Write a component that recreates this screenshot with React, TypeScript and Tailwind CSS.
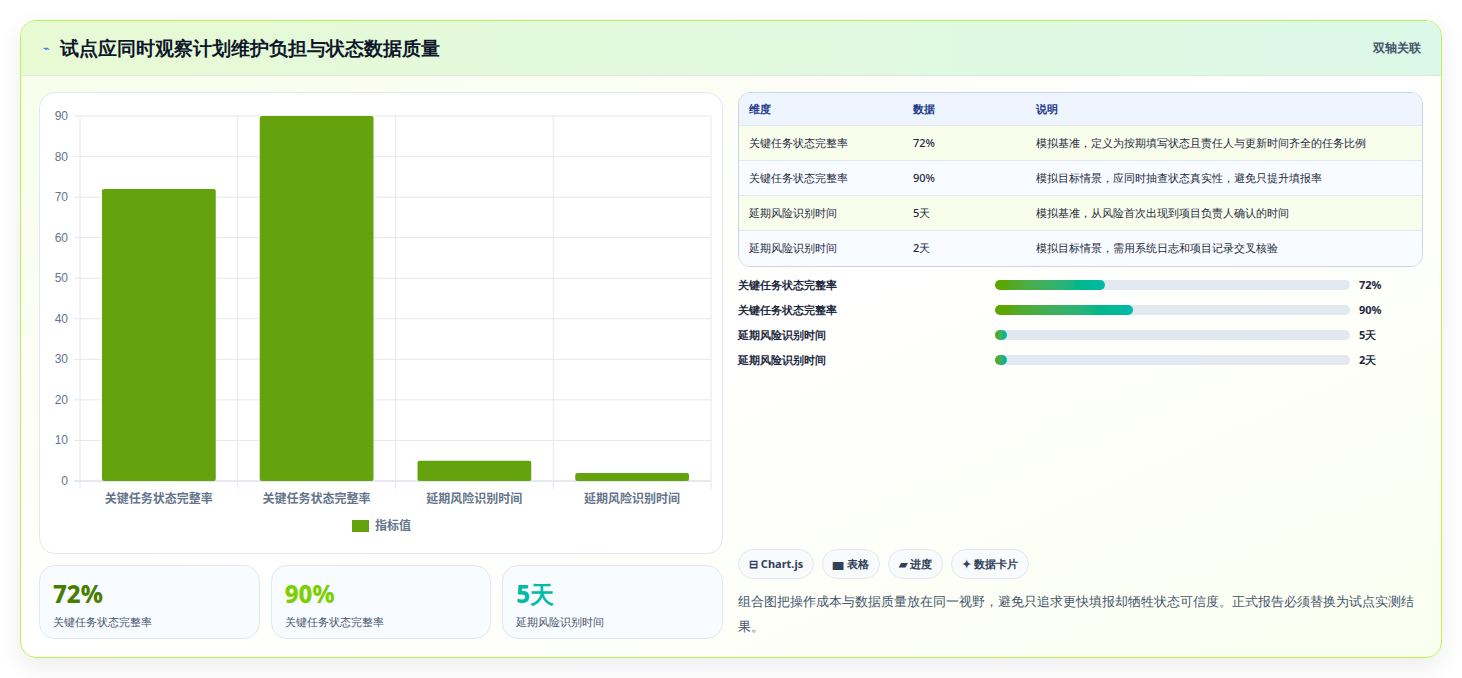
import React from "react";

const rows = [
  { name: "关键任务状态完整率", val: "72%", note: "模拟基准，定义为按期填写状态且责任人与更新时间齐全的任务比例", w: "31%" },
  { name: "关键任务状态完整率", val: "90%", note: "模拟目标情景，应同时抽查状态真实性，避免只提升填报率", w: "39%" },
  { name: "延期风险识别时间", val: "5天", note: "模拟基准，从风险首次出现到项目负责人确认的时间", w: "12px" },
  { name: "延期风险识别时间", val: "2天", note: "模拟目标情景，需用系统日志和项目记录交叉核验", w: "12px" },
];

const vals = [72, 90, 5, 2];

function Chart() {
  const L = 40, R = 671, T = 23, B = 388;
  const cw = (R - L) / 4;
  const y = (v: number) => B - ((B - T) * v) / 90;
  return (
    <svg width="683" height="460" className="block" style={{ fontFamily: "'Liberation Sans','Noto Sans CJK SC',sans-serif" }}>
      {[0, 10, 20, 30, 40, 50, 60, 70, 80, 90].map((t) => (
        <g key={t}>
          <line x1={L - 6} x2={R} y1={y(t)} y2={y(t)} stroke={t === 0 ? "#cbd5e1" : "#e5e7eb"} />
          <text x={L - 12} y={y(t) + 4} textAnchor="end" fontSize="12" fill="#64748b">{t}</text>
        </g>
      ))}
      {[0, 1, 2, 3, 4].map((i) => (
        <line key={i} x1={L + cw * i} x2={L + cw * i} y1={T} y2={B + 8} stroke="#e5e7eb" />
      ))}
      {vals.map((v, i) => (
        <g key={i}>
          <rect x={L + cw * i + 22} y={y(v)} width={cw - 44} height={B - y(v)} rx="2" fill="#64a30d" />
          <text x={L + cw * i + cw / 2} y={410} textAnchor="middle" fontSize="12" fill="#64748b" fontWeight="600">
            {i < 2 ? "关键任务状态完整率" : "延期风险识别时间"}
          </text>
        </g>
      ))}
      <rect x="312" y="427" width="17" height="12" fill="#64a30d" />
      <text x="335" y="437" fontSize="12" fill="#64748b" fontWeight="600">指标值</text>
    </svg>
  );
}

export default function App() {
  return (
    <div className="min-h-[678px] bg-white p-5 font-['Liberation_Sans','Noto_Sans_CJK_SC',sans-serif]">
      <div className="overflow-hidden rounded-2xl border border-lime-300 bg-gradient-to-br from-[#f8fde9] via-white to-[#fbfff0] shadow-[0_8px_24px_rgba(0,0,0,0.08)]">
        <div className="flex h-[55px] items-center justify-between border-b border-[#dfe8d8] bg-gradient-to-r from-[#e7fad4] to-[#dcf8e8] pl-[22px] pr-5">
          <div className="flex items-center gap-[10px]">
            <span className="text-[11px] text-blue-600">⌁</span>
            <h1 className="text-[19px] font-bold text-slate-900">试点应同时观察计划维护负担与状态数据质量</h1>
          </div>
          <span className="text-xs font-semibold text-slate-600">双轴关联</span>
        </div>
        <div className="flex gap-[15px] p-[18px] pt-4">
          <div className="flex w-[684px] flex-col gap-[11px]">
            <div className="h-[462px] rounded-2xl border border-slate-200 bg-white"><Chart /></div>
            <div className="grid grid-cols-3 gap-[11px]">
              {[
                ["72%", "text-lime-700"],
                ["90%", "text-lime-500"],
                ["5天", "text-teal-500"],
              ].map(([v, c], i) => (
                <div key={i} className="h-[74px] rounded-2xl border border-slate-200 bg-[#f8fbff] px-[13px] pt-3">
                  <div className={`text-2xl font-extrabold ${c}`}>{v}</div>
                  <div className="mt-1 text-[11px] font-medium text-slate-600">{i < 2 ? "关键任务状态完整率" : "延期风险识别时间"}</div>
                </div>
              ))}
            </div>
          </div>
          <div className="flex flex-1 flex-col">
            <div className="overflow-hidden rounded-xl border border-slate-300 text-[11px] font-medium text-slate-800">
              <div className="flex h-[33px] items-center border-b border-slate-200 bg-[#eef5ff] px-[10px] font-semibold text-[#1e3a8a]">
                <span className="w-[164px]">维度</span><span className="w-[123px]">数据</span><span>说明</span>
              </div>
              {rows.map((r, i) => (
                <div key={i} className={`flex h-[35px] items-center px-[10px] ${i < 3 ? "border-b border-slate-200" : ""} ${i % 2 ? "bg-[#f8fbff]" : "bg-[#f8fdec]"}`}>
                  <span className="w-[164px]">{r.name}</span><span className="w-[123px]">{r.val}</span><span>{r.note}</span>
                </div>
              ))}
            </div>
            <div className="mt-[11px] flex flex-col gap-[11px] text-[11px] font-semibold text-slate-800">
              {rows.map((r, i) => (
                <div key={i} className="flex h-[14px] items-center">
                  <span className="w-[257px]">{r.name}</span>
                  <div className="h-[10px] w-[355px] rounded-full bg-slate-200">
                    <div className="h-full rounded-full bg-gradient-to-r from-lime-600 to-teal-500" style={{ width: r.w }} />
                  </div>
                  <span className="ml-[9px] font-bold">{r.val}</span>
                </div>
              ))}
            </div>
            <div className="mt-auto flex gap-2 text-[11px] font-bold text-slate-700">
              {["⊟ Chart.js", "▆ 表格", "▰ 进度", "✦ 数据卡片"].map((t) => (
                <span key={t} className="rounded-full border border-slate-200 bg-[#f8fafc] px-[10px] py-[6px]">{t}</span>
              ))}
            </div>
            <p className="mt-[10px] text-[13px] font-medium leading-[25px] text-slate-600">
              组合图把操作成本与数据质量放在同一视野，避免只追求更快填报却牺牲状态可信度。正式报告必须替换为试点实测结果。
            </p>
          </div>
        </div>
      </div>
    </div>
  );
}
